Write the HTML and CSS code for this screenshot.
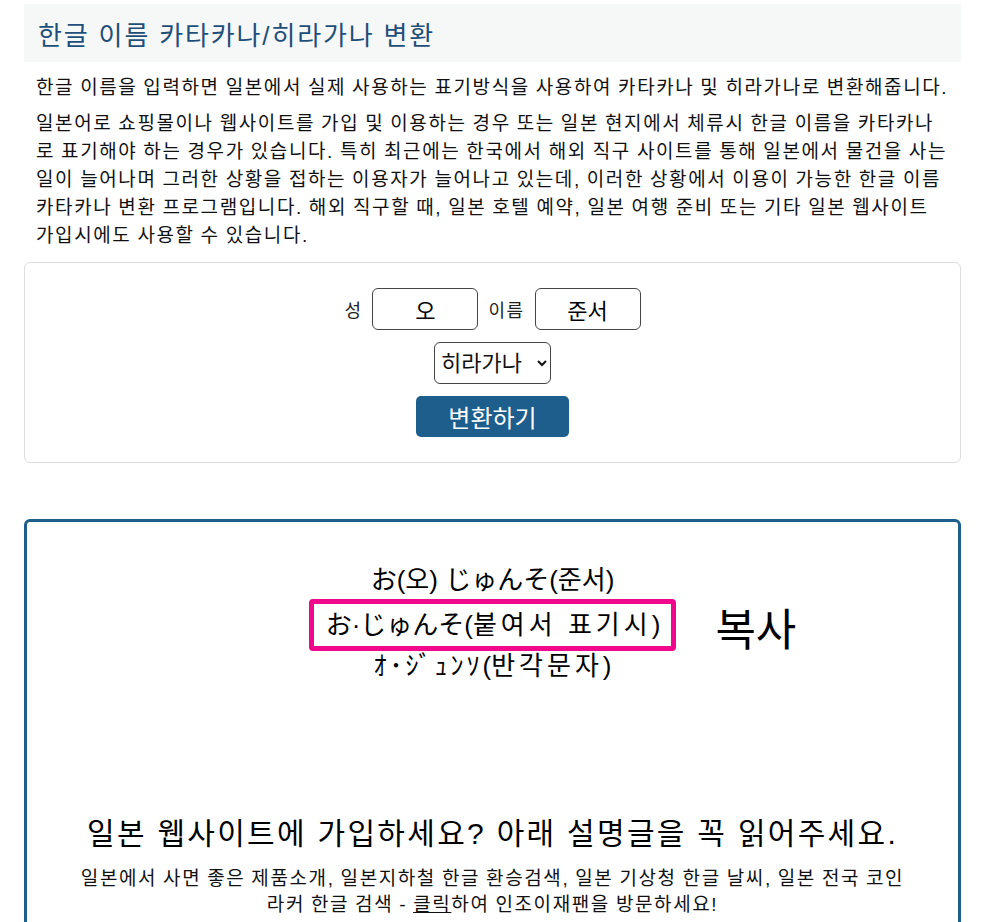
FILE: index.html
```html
<!DOCTYPE html>
<html lang="ko">
<head>
    <meta charset="UTF-8">
    <meta name="viewport" content="width=device-width, initial-scale=1.0">
    <title>한글 이름 카타카나/히라가나 변환</title>
    <link rel="stylesheet" href="styles.css">
</head>
<body>

    <div class="page">

        <div class="title-bar">
            <h1>한글 이름 카타카나/히라가나 변환</h1>
        </div>

        <div class="intro">
            <p>한글 이름을 입력하면 일본에서 실제 사용하는 표기방식을 사용하여 카타카나 및 히라가나로 변환해줍니다.</p>
            <p>일본어로 쇼핑몰이나 웹사이트를 가입 및 이용하는 경우 또는 일본 현지에서 체류시 한글 이름을 카타카나로 표기해야 하는 경우가 있습니다. 특히 최근에는 한국에서 해외 직구 사이트를 통해 일본에서 물건을 사는 일이 늘어나며 그러한 상황을 접하는 이용자가 늘어나고 있는데, 이러한 상황에서 이용이 가능한 한글 이름 카타카나 변환 프로그램입니다. 해외 직구할 때, 일본 호텔 예약, 일본 여행 준비 또는 기타 일본 웹사이트 가입시에도 사용할 수 있습니다.</p>
        </div>

        <form class="convert-form" id="convertForm">
            <div class="name-row">
                <label for="last-name">성</label>
                <input type="text" id="last-name" value="오">
                <label for="first-name">이름</label>
                <input type="text" id="first-name" value="준서">
            </div>
            <select id="kana-type">
                <option value="hira" selected>히라가나</option>
                <option value="kata">카타카나</option>
            </select>
            <button type="submit">변환하기</button>
        </form>

        <div class="result">
            <div class="result-main">
                <div class="result-lines">
                    <div class="line">お(오) じゅんそ(준서)</div>
                    <div class="line picked">お·じゅんそ(<span class="ko">붙여서 표기시</span>)</div>
                    <div class="line"><span class="half">ｵ･ｼﾞｭﾝｿ</span>(<span class="ko">반각문자</span>)</div>
                </div>
                <div class="copy">복사</div>
            </div>

            <h2>일본 웹사이트에 가입하세요? 아래 설명글을 꼭 읽어주세요.</h2>
            <p class="notice">일본에서 사면 좋은 제품소개, 일본지하철 한글 환승검색, 일본 기상청 한글 날씨, 일본 전국 코인<br>라커 한글 검색 - <a href="#">클릭</a>하여 인조이재팬을 방문하세요!</p>
        </div>

    </div>

</body>
</html>
```

FILE: styles.css
```css
body {
    font-family: "Liberation Sans", "Noto Sans CJK KR", sans-serif;
    margin: 0;
    background-color: #fff;
    color: #111;
}

.page {
    padding: 4px 20px 0 24px;
}


.title-bar {
    background-color: #f6f8f8;
    height: 58px;
    display: flex;
    align-items: center;
    padding: 0 14px;
}

.title-bar h1 {
    margin: 0;
    font-size: 26px;
    font-weight: normal;
    color: #1f4f78;
    letter-spacing: 1.85px;
}


.intro {
    padding: 12px 12px 0;
}

.intro p {
    margin: 0 0 8px;
    font-size: 19px;
    line-height: 28px;
    letter-spacing: 1.6px;
    word-spacing: -0.9px;
}

.intro p:last-child {
    margin-bottom: 0;
}


.convert-form {
    margin-top: 12px;
    border: 1px solid #ddd;
    border-radius: 6px;
    padding: 25px 0 25px;
    display: flex;
    flex-direction: column;
    align-items: center;
    gap: 12px;
}

.name-row {
    display: flex;
    align-items: center;
    gap: 10px;
}

.name-row label {
    font-size: 18px;
    letter-spacing: 1.5px;
    color: #222;
}

.name-row input {
    width: 106px;
    height: 42px;
    box-sizing: border-box;
    border: 1px solid #444;
    border-radius: 6px;
    font-family: inherit;
    font-size: 22px;
    text-align: center;
    color: #000;
    outline: none;
}

.convert-form select {
    width: 117px;
    height: 42px;
    border: 1px solid #444;
    border-radius: 6px;
    background-color: #fff;
    font-family: inherit;
    font-size: 22px;
    color: #111;
    padding: 0 2px;
}

.convert-form button {
    width: 153px;
    height: 41px;
    border: none;
    border-radius: 5px;
    background-color: #1d5e8c;
    color: #fff;
    font-family: inherit;
    font-size: 24px;
    cursor: pointer;
}

.convert-form button:hover {
    background-color: #174b70;
}


.result {
    margin-top: 56px;
    border: 3px solid #1d5e8b;
    border-radius: 6px;
    padding: 43px 0 40px;
    text-align: center;
}

.result-main {
    display: grid;
    grid-template-columns: 1fr auto 1fr;
    align-items: center;
}

.result-lines {
    grid-column: 2;
    display: flex;
    flex-direction: column;
    align-items: center;
}

.line {
    font-size: 26px;
    line-height: 30px;
    color: #000;
}

.line .ko {
    letter-spacing: 4px;
}

.line .half {
    letter-spacing: 3px;
}

.line.picked {
    margin-top: 4px;
    border: 5px solid #f1078c;
    border-radius: 4px;
    padding: 6px 11px 6px 12px;
}

.copy {
    grid-column: 3;
    justify-self: start;
    padding-left: 39px;
    padding-top: 8px;
    font-size: 44px;
    color: #000;
    cursor: pointer;
}

.result h2 {
    margin: 133px 0 12px;
    font-size: 30px;
    line-height: 40px;
    font-weight: normal;
    letter-spacing: 2.3px;
    color: #000;
}

.notice {
    margin: 0;
    font-size: 19px;
    line-height: 26px;
    letter-spacing: 1.6px;
    word-spacing: -0.9px;
}

.notice a {
    color: #111;
    text-decoration: underline;
}
```
